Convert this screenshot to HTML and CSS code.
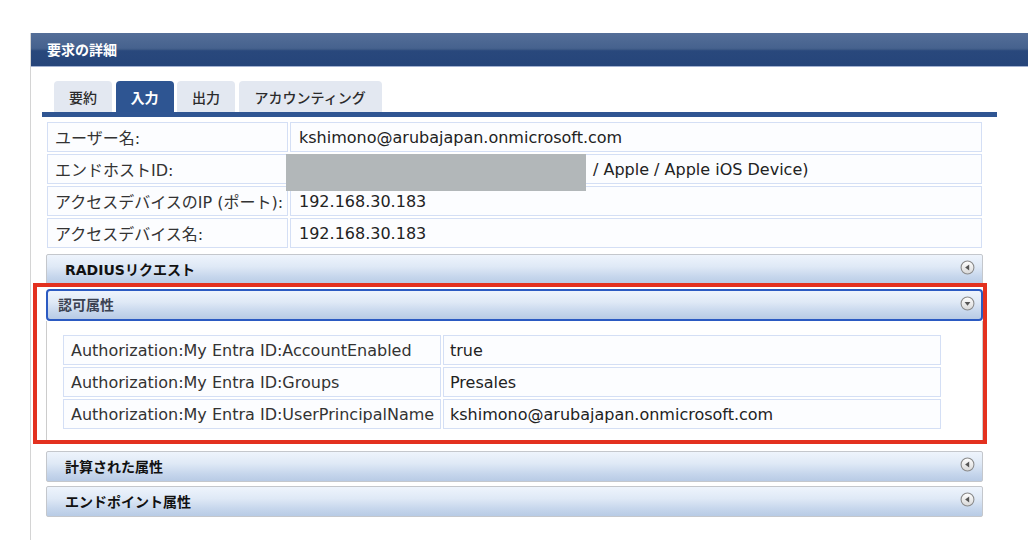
FILE: index.html
```html
<!DOCTYPE html>
<html lang="ja">
<head>
<meta charset="utf-8">
<title>要求の詳細</title>
<link rel="stylesheet" href="styles.css">
</head>
<body>
<div class="panel">
  <div class="panel-header">要求の詳細</div>
  <div class="panel-body">
    <div class="tabs">
      <div class="tab">要約</div>
      <div class="tab active">入力</div>
      <div class="tab">出力</div>
      <div class="tab">アカウンティング</div>
    </div>
    <div class="content">
      <table class="kv main">
        <tr><td class="k">ユーザー名:</td><td class="v">kshimono@arubajapan.onmicrosoft.com</td></tr>
        <tr><td class="k">エンドホストID:</td><td class="v redacted"><span class="redact"></span><span class="tail">/ Apple / Apple iOS Device)</span></td></tr>
        <tr><td class="k">アクセスデバイスのIP (ポート):</td><td class="v">192.168.30.183</td></tr>
        <tr><td class="k">アクセスデバイス名:</td><td class="v">192.168.30.183</td></tr>
      </table>

      <div class="section-head">
        <span class="title">RADIUSリクエスト</span>
        <svg class="toggle" viewBox="0 0 14 14" width="15" height="15"><defs><linearGradient id="g1" x1="0" y1="0" x2="0" y2="1"><stop offset="0" stop-color="#ffffff"/><stop offset="1" stop-color="#d8d8d8"/></linearGradient></defs><circle cx="7" cy="7" r="6" fill="url(#g1)" stroke="#8a8a8a" stroke-width="1"/><path d="M8.6 4.3 L4.8 7 L8.6 9.7 Z" fill="#555"/></svg>
      </div>

      <div class="highlight">
        <div class="section-head open">
          <span class="title">認可属性</span>
          <svg class="toggle" viewBox="0 0 14 14" width="15" height="15"><defs><linearGradient id="g2" x1="0" y1="0" x2="0" y2="1"><stop offset="0" stop-color="#ffffff"/><stop offset="1" stop-color="#d8d8d8"/></linearGradient></defs><circle cx="7" cy="7" r="6" fill="url(#g2)" stroke="#8a8a8a" stroke-width="1"/><path d="M4.3 5.6 L9.7 5.6 L7 9.2 Z" fill="#555"/></svg>
        </div>
        <div class="section-body">
          <table class="kv attrs">
            <tr><td class="k">Authorization:My Entra ID:AccountEnabled</td><td class="v">true</td></tr>
            <tr><td class="k">Authorization:My Entra ID:Groups</td><td class="v">Presales</td></tr>
            <tr><td class="k">Authorization:My Entra ID:UserPrincipalName</td><td class="v">kshimono@arubajapan.onmicrosoft.com</td></tr>
          </table>
        </div>
      </div>

      <div class="section-head gap-lg">
        <span class="title">計算された属性</span>
        <svg class="toggle" viewBox="0 0 14 14" width="15" height="15"><defs><linearGradient id="g3" x1="0" y1="0" x2="0" y2="1"><stop offset="0" stop-color="#ffffff"/><stop offset="1" stop-color="#d8d8d8"/></linearGradient></defs><circle cx="7" cy="7" r="6" fill="url(#g3)" stroke="#8a8a8a" stroke-width="1"/><path d="M8.6 4.3 L4.8 7 L8.6 9.7 Z" fill="#555"/></svg>
      </div>
      <div class="section-head">
        <span class="title">エンドポイント属性</span>
        <svg class="toggle" viewBox="0 0 14 14" width="15" height="15"><defs><linearGradient id="g4" x1="0" y1="0" x2="0" y2="1"><stop offset="0" stop-color="#ffffff"/><stop offset="1" stop-color="#d8d8d8"/></linearGradient></defs><circle cx="7" cy="7" r="6" fill="url(#g4)" stroke="#8a8a8a" stroke-width="1"/><path d="M8.6 4.3 L4.8 7 L8.6 9.7 Z" fill="#555"/></svg>
      </div>
    </div>
  </div>
</div>
</body>
</html>
```

FILE: styles.css
```css
html, body {
  margin: 0;
  padding: 0;
  background: #ffffff;
  overflow: hidden;
}

body {
  font-family: "DejaVu Sans", "Noto Sans CJK JP", sans-serif;
  color: #222;
}

.panel {
  margin: 33px 0 0 30px;
  border-left: 1px solid #d4d4d4;
  min-height: 507px;
}

.panel-header {
  height: 33px;
  line-height: 33px;
  padding-left: 16px;
  color: #ffffff;
  font-family: "Noto Sans CJK JP", sans-serif;
  font-weight: 700;
  font-size: 14px;
  background: linear-gradient(to bottom, #546e98 0%, #46628e 46%, #3b5885 50%, #29487c 54%, #26457a 100%);
  border-bottom: 1px solid #a3b2d2;
}

.panel-body {
  padding: 14px 0 0 11px;
}

.tabs {
  display: flex;
  gap: 3.5px;
  width: 943px;
  padding-left: 12px;
  border-bottom: 5px solid #2f5592;
}

.tab {
  height: 31px;
  line-height: 32px;
  padding: 0 15px;
  background: #e3e8f1;
  border-radius: 4px 4px 0 0;
  font-family: "Noto Sans CJK JP", sans-serif;
  font-weight: 500;
  font-size: 14px;
  color: #2b2b2b;
}

.tab:last-child {
  padding: 0 16px;
}

.tab.active {
  background: #2e5592;
  color: #ffffff;
  font-weight: 700;
}

.content {
  margin-left: 4px;
  width: 937px;
}

.kv {
  border-collapse: separate;
  border-spacing: 2px;
  table-layout: fixed;
  font-size: 16px;
}

.kv td {
  box-sizing: border-box;
  height: 30px;
  border: 1px solid #d4dff5;
  background: #fcfdff;
  white-space: nowrap;
  vertical-align: middle;
  padding: 0 0 0 7px;
}

.kv td.k {
  color: #333;
}

.kv td.v {
  color: #222;
}

.main {
  width: 939px;
  margin-top: 3px;
  margin-left: -1px;
}

.main td.k {
  width: 241px;
  padding-left: 7px;
}

.main td.v {
  padding-left: 8px;
}

.redacted {
  position: relative;
}

.redact {
  position: absolute;
  left: -5px;
  top: -1px;
  width: 300px;
  height: 37px;
  background: #b2b7b9;
}

.tail {
  padding-left: 294px;
}

.section-head {
  box-sizing: border-box;
  height: 31px;
  margin-top: 4px;
  display: flex;
  align-items: center;
  justify-content: space-between;
  padding: 0 7px 0 18px;
  border: 1px solid #c4c7cc;
  border-radius: 2px;
  background: linear-gradient(to bottom, #eef4fc 0%, #dfe9f6 40%, #c6d6ec 75%, #b8cbe5 100%);
  font-family: "DejaVu Sans", "Noto Sans CJK JP", sans-serif;
  font-weight: 700;
  font-size: 14px;
  color: #111;
}

.section-head .title {
  line-height: 1;
}

.section-head .toggle {
  display: block;
  margin-top: -4px;
}

.section-head.open {
  height: 32px;
  padding-left: 10px;
  border: 2px solid #2b5ac2;
  border-radius: 4px;
  color: #3b4252;
}

.section-head.open .toggle {
  margin-right: -1px;
}

.section-head.gap-lg {
  margin-top: 7px;
}

.highlight {
  position: relative;
  margin-top: 4px;
}

.highlight::after {
  content: "";
  position: absolute;
  top: -6px;
  left: -13px;
  right: -4px;
  bottom: 0;
  border: 4px solid #e3311f;
  pointer-events: none;
}

.section-body {
  border: 1px solid #cccccc;
  border-top: none;
  padding: 12px 0 12px 14px;
}

.attrs {
  width: 882px;
}

.attrs td.k {
  width: 378px;
}

.attrs td.v {
  padding-left: 6px;
}
```
